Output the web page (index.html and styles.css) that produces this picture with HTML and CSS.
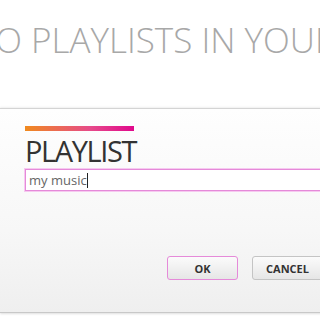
FILE: index.html
```html
<!DOCTYPE html>
<html>
<head>
<meta charset="utf-8">
<link rel="stylesheet" href="styles.css">
</head>
<body>
<div class="page">
  <div class="bg-title">NO PLAYLISTS IN YOUR COLLECTION</div>
  <div class="dialog">
    <div class="accent"></div>
    <div class="heading">PLAYLIST</div>
    <div class="input"><span class="value">my music</span><span class="caret"></span></div>
    <div class="actions">
      <button class="btn btn-primary">OK</button>
      <button class="btn">CANCEL</button>
    </div>
  </div>
</div>
</body>
</html>
```
FILE: styles.css
```css
html, body {
  margin: 0;
  padding: 0;
  background: #ffffff;
  overflow: hidden;
}
.page {
  width: 320px;
  height: 320px;
  overflow: hidden;
  font-family: "Open Sans", "Noto Sans", sans-serif;
}
.bg-title {
  white-space: nowrap;
  font-size: 35px;
  font-weight: 300;
  color: #a8a8a8;
  margin-left: -30px;
  padding-top: 16px;
  height: 92px;
  line-height: 48px;
  letter-spacing: 0;
}
.dialog {
  height: 205px;
  border-top: 1px solid #d4d4d4;
  border-bottom: 1px solid #c8c8c8;
  background: linear-gradient(#fefefe 0%, #f7f7f7 60%, #efefef 100%);
  box-shadow: 0 -1px 2px rgba(0,0,0,0.06), 0 1px 2px rgba(0,0,0,0.12);
  padding: 17px 0 0 25px;
  box-sizing: border-box;
  width: 340px;
}
.accent {
  width: 109px;
  height: 5px;
  background: linear-gradient(90deg, #f08a1e, #e64a8a 60%, #e0098c);
}
.heading {
  font-size: 29px;
  font-weight: 400;
  color: #333333;
  line-height: 36px;
  margin-top: 2px;
  letter-spacing: -1.4px;
}
.input {
  height: 20px;
  border: 1px solid #e58ad9;
  box-shadow: 0 0 0 1px #f6c9f0;
  background: #ffffff;
  display: flex;
  align-items: center;
  padding-left: 3px;
  font-size: 13px;
  color: #666666;
}
.caret {
  width: 1px;
  height: 15px;
  background: #222;
}
.actions {
  display: flex;
  gap: 14px;
  margin-top: 65px;
  margin-left: 142px;
}
.btn {
  width: 71px;
  height: 24px;
  font-family: "Open Sans", "Noto Sans", sans-serif;
  font-size: 11px;
  font-weight: 700;
  color: #333;
  border: 1px solid #c4c4c4;
  border-radius: 3px;
  background: linear-gradient(#fbfbfb, #e6e6e6);
  padding: 0;
  flex: none;
}
.btn-primary {
  border-color: #e58ad9;
}
```
